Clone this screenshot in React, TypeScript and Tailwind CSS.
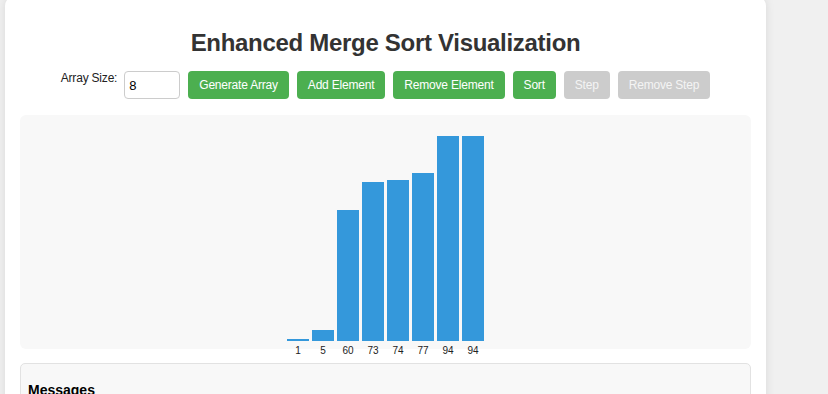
import { useState } from "react";

const values = [1, 5, 60, 73, 74, 77, 94, 94];

export default function App() {
  const [size] = useState("8");
  const max = Math.max(...values);

  return (
    <div className="min-h-screen bg-[#f0f0f0] px-[5px] font-['Liberation_Sans',Arial,sans-serif] text-[#333]">
      <div className="-mt-[4px] w-[761px] rounded-[10px] bg-white px-[15px] pt-[33px] pb-6 shadow-[0_0_10px_rgba(0,0,0,0.1)]">
        <h1 className="mb-[14px] text-center text-[24px] font-bold leading-[28px] tracking-[-0.3px] text-[#333]">
          Enhanced Merge Sort Visualization
        </h1>

        <div className="flex items-start justify-center gap-2 text-[12px] tracking-[-0.2px]">
          <label className="mr-[-1px] leading-[14px] text-[#222]">Array Size:</label>
          <input
            type="text"
            value={size}
            readOnly
            className="h-[28px] w-[56px] rounded-[4px] border border-[#ccc] px-[4px] text-[13px] text-black outline-none"
          />
          <button className="rounded-[4px] bg-[#4caf50] px-[11px] py-[7px] leading-[14px] text-white">
            Generate Array
          </button>
          <button className="rounded-[4px] bg-[#4caf50] px-[11px] py-[7px] leading-[14px] text-white">
            Add Element
          </button>
          <button className="rounded-[4px] bg-[#4caf50] px-[11px] py-[7px] leading-[14px] text-white">
            Remove Element
          </button>
          <button className="rounded-[4px] bg-[#4caf50] px-[11px] py-[7px] leading-[14px] text-white">
            Sort
          </button>
          <button disabled className="rounded-[4px] bg-[#cccccc] px-[11px] py-[7px] leading-[14px] text-[#f4f4f4]">
            Step
          </button>
          <button disabled className="rounded-[4px] bg-[#cccccc] px-[11px] py-[7px] leading-[14px] text-[#f4f4f4]">
            Remove Step
          </button>
        </div>

        <div className="mt-[16px] flex h-[234px] items-end justify-center gap-[3px] rounded-[6px] bg-[#f8f8f8] pb-[8px]">
          {values.map((v, i) => (
            <div
              key={i}
              className="relative w-[22px] bg-[#3498db]"
              style={{ height: `${(v / max) * 205}px` }}
            >
              <span className="absolute left-1/2 top-full mt-[4px] -translate-x-1/2 text-[10px] leading-[12px] text-[#222]">
                {v}
              </span>
            </div>
          ))}
        </div>

        <div className="mt-[14px] rounded-[5px] border border-[#e2e2e2] bg-[#f8f8f8] px-[7px] pt-[18px] pb-[10px]">
          <h3 className="text-[14px] font-bold leading-[16px] text-black">Messages</h3>
          <div className="h-[60px]" />
        </div>
      </div>
    </div>
  );
}
